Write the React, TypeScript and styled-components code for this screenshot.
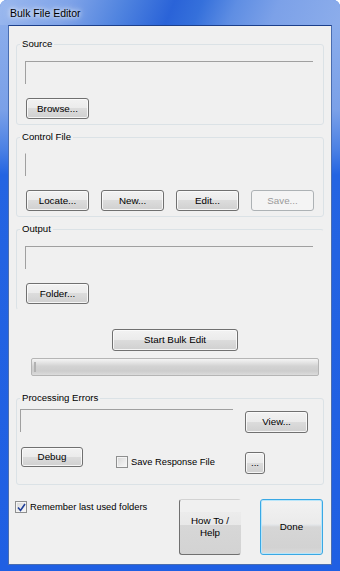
import styled, { createGlobalStyle } from 'styled-components';

const GlobalStyle = createGlobalStyle`
  html, body {
    margin: 0;
    padding: 0;
    background: #ffffff;
  }
  body {
    font-family: "Liberation Sans", Arial, sans-serif;
    font-size: 9.6px;
    color: #000;
  }
  *, *::before, *::after {
    box-sizing: border-box;
  }
`;

const Window = styled.div`
  width: 340px;
  height: 571px;
  display: flex;
  flex-direction: column;
  padding: 0 8px 6px;
  border-radius: 7px 7px 0 0;
  overflow: hidden;
  background: linear-gradient(
    to bottom,
    #8fb0ec 0px,
    #7aa0e8 110px,
    #4a80e4 150px,
    #2464e2 175px,
    #1f5fe3 100%
  );
`;

const TitleBar = styled.div`
  flex: none;
  height: 25px;
  margin: 0 -8px;
  padding: 1px 0 0 10px;
  display: flex;
  align-items: center;
  background-color: #5d8de2;
  background-image: linear-gradient(
    112deg,
    #9ab8ee 0%,
    #7fa3e8 20%,
    #4f83df 36%,
    #2a63d8 50%,
    #3570db 58%,
    #5f8ee3 68%,
    #7ca1e8 80%,
    #8cadeb 100%
  );
`;

const Title = styled.span`
  font-size: 10.5px;
  color: #000;
  text-shadow: 0 0 4px #fff, 0 0 8px rgba(255, 255, 255, 0.9);
`;

const Client = styled.div`
  flex: 1;
  display: flex;
  flex-direction: column;
  align-items: flex-start;
  padding: 12px 7px 0;
  background: #f0f0f0;
  border: 1px solid #4a6db0;
  border-top-color: #1c3f8a;
`;

const Group = styled.fieldset<{ $mt?: number; $open?: boolean }>`
  margin: ${p => p.$mt ?? 0}px 0 0;
  padding: 0;
  min-width: 0;
  width: 100%;
  border: 1px solid #dbe2e6;
  border-radius: 3px;
  ${p => p.$open && 'border-right-color: transparent; border-bottom-color: transparent;'}
`;

const Legend = styled.legend`
  margin-left: 3px;
  padding: 0 2px;
  font-size: 9.6px;
  line-height: 12px;
`;

const GroupBody = styled.div<{ $pad: string }>`
  display: flex;
  flex-direction: column;
  align-items: flex-start;
  gap: 14px;
  padding: ${p => p.$pad};
`;

const TextBox = styled.div<{ $w?: number; $noTop?: boolean }>`
  width: ${p => (p.$w ? `${p.$w}px` : '100%')};
  height: 23px;
  border-left: 1px solid #a0a0a0;
  border-top: 1px solid ${p => (p.$noTop ? 'transparent' : '#a0a0a0')};
`;

const ButtonRow = styled.div`
  display: flex;
  gap: 12px;
  padding-left: 1px;
`;

const Button = styled.button<{ $w: number; $h?: number }>`
  width: ${p => p.$w}px;
  height: ${p => p.$h ?? 21}px;
  padding: 0;
  font-family: "Liberation Sans", Arial, sans-serif;
  font-size: 9.8px;
  line-height: 12px;
  color: #000;
  border: 1px solid #707070;
  border-radius: 3px;
  box-shadow: inset 0 0 0 1px rgba(252, 252, 252, 0.85);
  background: linear-gradient(
    to bottom,
    #f2f2f2 0%,
    #ebebeb 48%,
    #dcdcdc 50%,
    #d0d0d0 100%
  );

  &:disabled {
    color: #9a9a9a;
    border-color: #adb2b5;
    box-shadow: none;
    background: #f4f4f4;
  }
`;

const HelpButton = styled(Button)`
  border-top-color: transparent;
  border-right-color: transparent;
  box-shadow: none;
  background: linear-gradient(
    to bottom,
    #f0f0f0 0px,
    #f0f0f0 12px,
    #ececec 12px,
    #e8e8e8 25px,
    #d7d7d7 25px,
    #d3d3d3 100%
  );
`;

const DefaultButton = styled(Button)`
  border-color: #3aa8e4;
  box-shadow: inset 0 0 0 1px #b9e6fa;
  background: linear-gradient(
    to bottom,
    #f2f2f2 0%,
    #ebebeb 44%,
    #e3e6e9 46%,
    #d6d6d6 50%,
    #d2d2d2 88%,
    #dcdcdc 100%
  );
`;

const CenterBlock = styled.div<{ $mt: number; $ml: number }>`
  margin: ${p => p.$mt}px 0 0 ${p => p.$ml}px;
`;

const Progress = styled.div`
  margin: 7px 0 0 15px;
  width: 288px;
  height: 18px;
  padding: 3px 2px;
  border: 1px solid #b5b5b5;
  border-radius: 2px;
  background: linear-gradient(
    to bottom,
    #f4f4f4 0%,
    #e2e2e2 25%,
    #d3d3d3 45%,
    #cdcdcd 75%,
    #dcdcdc 100%
  );
`;

const ProgressFill = styled.div`
  width: 2px;
  height: 100%;
  background: #b2b2b2;
`;

const ErrorsBody = styled.div`
  display: grid;
  grid-template-columns: 213px 63px;
  column-gap: 12px;
  row-gap: 14px;
  align-items: start;
  padding: 5px 0 10px 3px;
`;

const ErrorsLeft = styled.div`
  display: flex;
  align-items: flex-start;
  padding-left: 1px;
`;

const CheckLabel = styled.label<{ $mt?: number; $ml?: number }>`
  display: flex;
  align-items: center;
  gap: 3px;
  margin: ${p => p.$mt ?? 0}px 0 0 ${p => p.$ml ?? 0}px;
  font-size: 9.4px;
  line-height: 12px;
  white-space: nowrap;
`;

const CheckBox = styled.span`
  width: 12px;
  height: 12px;
  flex: none;
  display: inline-flex;
  align-items: center;
  justify-content: center;
  border: 1px solid #8e8f8f;
  box-shadow: inset 0 0 0 1px #f4f4f4;
  background: linear-gradient(135deg, #d6d6d6 0%, #ececec 60%, #f8f8f8 100%);
`;

const BottomRow = styled.div`
  display: flex;
  align-items: flex-start;
  width: 100%;
  margin-top: 14px;
`;

const Spacer = styled.div`
  flex: 1;
`;

const Check = () => (
  <svg width="9" height="9" viewBox="0 0 9 9">
    <path d="M1 4.5 L3.5 7.5 L8 1" fill="none" stroke="#21409a" strokeWidth="1.6" />
  </svg>
);

const App = () => {
  return (
    <Window>
      <GlobalStyle />
      <TitleBar>
        <Title>Bulk File Editor</Title>
      </TitleBar>
      <Client>
        <Group>
          <Legend>Source</Legend>
          <GroupBody $pad="11px 10px 5px 8px">
            <TextBox />
            <ButtonRow>
              <Button $w={63}>Browse...</Button>
            </ButtonRow>
          </GroupBody>
        </Group>

        <Group $mt={6}>
          <Legend>Control File</Legend>
          <GroupBody $pad="10px 10px 5px 8px">
            <TextBox $noTop />
            <ButtonRow>
              <Button $w={63}>Locate...</Button>
              <Button $w={63}>New...</Button>
              <Button $w={63}>Edit...</Button>
              <Button $w={63} disabled>Save...</Button>
            </ButtonRow>
          </GroupBody>
        </Group>

        <Group $mt={6} $open>
          <Legend>Output</Legend>
          <GroupBody $pad="11px 10px 5px 8px">
            <TextBox />
            <ButtonRow>
              <Button $w={63}>Folder...</Button>
            </ButtonRow>
          </GroupBody>
        </Group>

        <CenterBlock $mt={19} $ml={96}>
          <Button $w={126} $h={22}>Start Bulk Edit</Button>
        </CenterBlock>
        <Progress>
          <ProgressFill />
        </Progress>

        <Group $mt={16}>
          <Legend>Processing Errors</Legend>
          <ErrorsBody>
            <TextBox />
            <Button $w={63} $h={22} style={{ marginTop: 2 }}>View...</Button>
            <ErrorsLeft>
              <Button $w={62} $h={20}>Debug</Button>
              <CheckLabel $mt={9} $ml={33}>
                <CheckBox />
                Save Response File
              </CheckLabel>
            </ErrorsLeft>
            <Button $w={20} $h={22} style={{ marginTop: 5 }}>...</Button>
          </ErrorsBody>
        </Group>

        <BottomRow>
          <CheckLabel $mt={2} $ml={-1}>
            <CheckBox>
              <Check />
            </CheckBox>
            Remember last used folders
          </CheckLabel>
          <Spacer />
          <HelpButton $w={62} $h={56}>
            How To /
            <br />
            Help
          </HelpButton>
          <DefaultButton $w={63} $h={56} style={{ marginLeft: 19, marginRight: 1 }}>
            Done
          </DefaultButton>
        </BottomRow>
      </Client>
    </Window>
  );
};

export default App;
